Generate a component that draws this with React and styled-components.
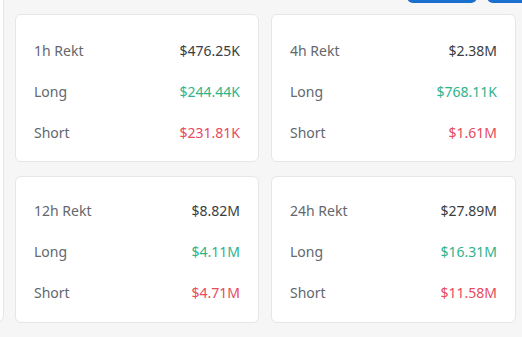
import React from "react";
import styled, { createGlobalStyle } from "styled-components";

const GlobalStyle = createGlobalStyle`
  html, body {
    margin: 0;
    padding: 0;
    background: #f6f6f6;
    overflow: hidden;
  }
  body {
    font-family: "Noto Sans", "Open Sans", sans-serif;
  }
`;

const Page = styled.div`
  width: 522px;
  height: 337px;
  display: flex;
  flex-direction: column;
  overflow: hidden;
`;

const Toolbar = styled.div`
  display: flex;
  justify-content: flex-end;
  gap: 10px;
  margin-top: -27px;
  margin-right: -20px;
`;

const ToolButton = styled.div`
  width: ${(props) => props.width}px;
  height: 30px;
  background: #1a6fcf;
  border-radius: 6px;
`;

const Body = styled.div`
  display: flex;
  gap: 11px;
  margin-top: 11px;
  margin-left: -195px;
`;

const SideCard = styled.div`
  flex: none;
  width: 199px;
  height: 360px;
  margin-top: -52px;
  background: #fff;
  border: 1px solid #e6e6e6;
  border-radius: 6px;
  box-sizing: border-box;
`;

const Grid = styled.div`
  display: grid;
  grid-template-columns: 244px 245px;
  grid-template-rows: 148px 147px;
  column-gap: 12px;
  row-gap: 14px;
`;

const Card = styled.div`
  background: #fff;
  border: 1px solid #e6e6e6;
  border-radius: 6px;
  box-sizing: border-box;
  padding: ${(props) => props.top}px 18px 0 18px;
  display: flex;
  flex-direction: column;
  gap: 21px;
`;

const Row = styled.div`
  display: flex;
  justify-content: space-between;
  align-items: center;
  height: 20px;
  font-size: 14px;
`;

const Label = styled.span`
  color: #63676e;
`;

const Value = styled.span`
  color: ${(props) => props.color || "#3a3d42"};
`;

const stats = [
  { period: "1h", total: "$476.25K", long: "$244.44K", short: "$231.81K", top: 25 },
  { period: "4h", total: "$2.38M", long: "$768.11K", short: "$1.61M", top: 25 },
  { period: "12h", total: "$8.82M", long: "$4.11M", short: "$4.71M", top: 23 },
  { period: "24h", total: "$27.89M", long: "$16.31M", short: "$11.58M", top: 23 },
];

function RektCard({ period, total, long, short, top }) {
  return (
    <Card top={top}>
      <Row>
        <Label>{period} Rekt</Label>
        <Value>{total}</Value>
      </Row>
      <Row>
        <Label>Long</Label>
        <Value color="#2fb38b">{long}</Value>
      </Row>
      <Row>
        <Label>Short</Label>
        <Value color="#e84a5e">{short}</Value>
      </Row>
    </Card>
  );
}

export default function App() {
  return (
    <>
      <GlobalStyle />
      <Page>
        <Toolbar>
          <ToolButton width={70} />
          <ToolButton width={55} />
        </Toolbar>
        <Body>
          <SideCard />
          <Grid>
            {stats.map((s) => (
              <RektCard key={s.period} {...s} />
            ))}
          </Grid>
        </Body>
      </Page>
    </>
  );
}
